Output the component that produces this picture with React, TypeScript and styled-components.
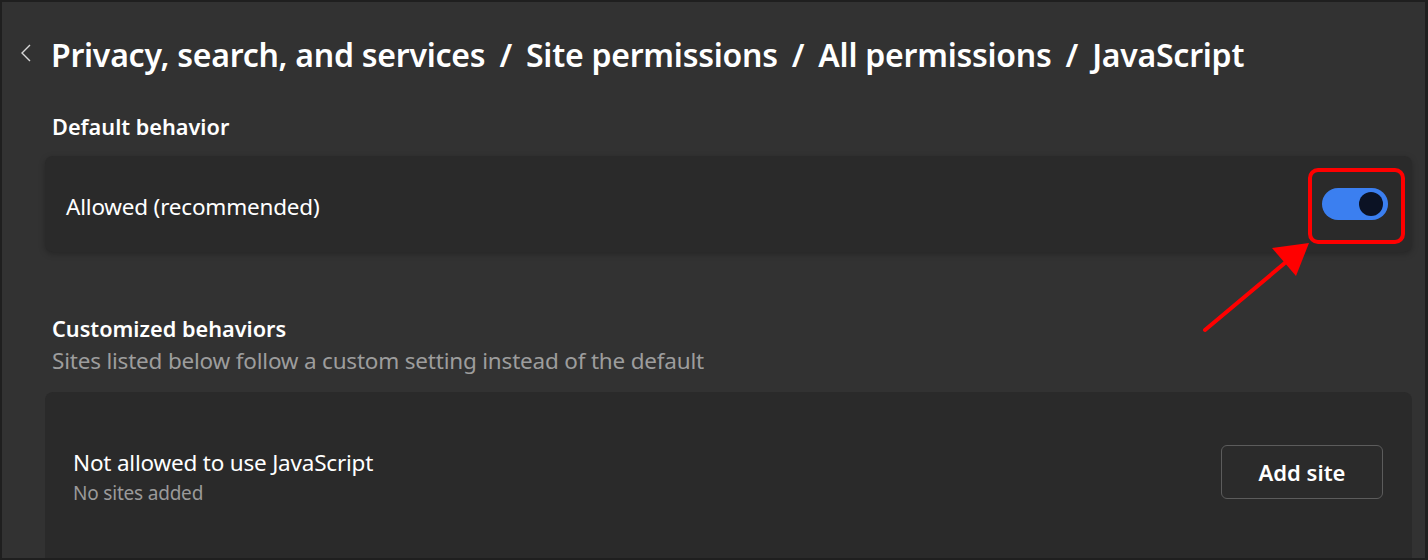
import React from 'react';
import styled, { createGlobalStyle } from 'styled-components';

const GlobalStyle = createGlobalStyle`
  html, body {
    margin: 0;
    padding: 0;
    background: #1e1e1e;
  }
  body {
    font-family: "Noto Sans", "Open Sans", sans-serif;
    color: #ffffff;
  }
`;

export default function App() {
  return (
    <>
      <GlobalStyle />
      <Frame>
        <Page>
          <Header>
            <BackButton aria-label="Back">
              <svg width="12" height="20" viewBox="0 0 12 20">
                <path d="M10 2 L2 10 L10 18" fill="none" stroke="#d8d8d8" strokeWidth="1.4" />
              </svg>
            </BackButton>
            <Title>
              Privacy, search, and services <Sep>/</Sep> Site permissions <Sep>/</Sep> All permissions{' '}
              <Sep>/</Sep> JavaScript
            </Title>
          </Header>

          <SectionTitle top={34}>Default behavior</SectionTitle>
          <Card>
            <SettingRow>
              <RowLabel shift={6}>Allowed (recommended)</RowLabel>
              <ToggleWrap>
                <Toggle on />
                <Highlight />
                <Arrow width="130" height="110" viewBox="0 0 130 110">
                  <path d="M13 102 L106 24" stroke="#ff0000" strokeWidth="4" strokeLinecap="round" fill="none" />
                  <path d="M117 15 L80 20 L104 48 Z" fill="#ff0000" />
                </Arrow>
              </ToggleWrap>
            </SettingRow>
          </Card>

          <SectionTitle top={62}>Customized behaviors</SectionTitle>
          <SectionNote>Sites listed below follow a custom setting instead of the default</SectionNote>

          <ListCard>
            <ListRow>
              <div>
                <RowLabel>Not allowed to use JavaScript</RowLabel>
                <RowNote>No sites added</RowNote>
              </div>
              <AddButton>Add site</AddButton>
            </ListRow>
          </ListCard>
        </Page>
      </Frame>
    </>
  );
}

const Frame = styled.div`
  width: 1428px;
  height: 560px;
  box-sizing: border-box;
  border: 2px solid #1f1f1f;
  border-right-width: 3px;
  background: #323232;
  overflow: hidden;
`;

const Page = styled.div`
  padding: 28px 13px 0 43px;
  display: flex;
  flex-direction: column;
`;

const Header = styled.div`
  display: flex;
  align-items: center;
  margin-left: -28px;
  height: 48px;
`;

const BackButton = styled.div`
  width: 31px;
  display: flex;
  align-items: center;
  padding-left: 3px;
  margin-top: -2px;
`;

const Title = styled.h1`
  margin: 0;
  font-size: 32px;
  font-weight: 600;
  letter-spacing: -0.25px;
  color: #ffffff;
  white-space: nowrap;
`;

const Sep = styled.span`
  margin: 0 6px;
`;

const SectionTitle = styled.h2<{ top: number }>`
  margin: ${(p) => p.top}px 0 0 7px;
  font-size: 21.7px;
  font-weight: 600;
  line-height: 30px;
  color: #ffffff;
`;

const SectionNote = styled.div`
  margin: 2px 0 0 7px;
  font-size: 22.5px;
  line-height: 30px;
  color: #9d9d9d;
  letter-spacing: -0.2px;
`;

const Card = styled.div`
  margin-top: 14px;
  background: #2a2a2a;
  border-radius: 8px;
  box-shadow: 0 2px 6px rgba(0, 0, 0, 0.25);
`;

const SettingRow = styled.div`
  height: 96px;
  display: flex;
  align-items: center;
  justify-content: space-between;
  padding: 0 24px 0 21px;
`;

const RowLabel = styled.div<{ shift?: number }>`
  font-size: 22.5px;
  line-height: 30px;
  color: #ffffff;
  letter-spacing: -0.2px;
  margin-top: ${(p) => p.shift ?? 0}px;
`;

const RowNote = styled.div`
  font-size: 19px;
  line-height: 24px;
  color: #9a9a9a;
  margin-top: 3px;
  letter-spacing: -0.2px;
`;

const ToggleWrap = styled.div`
  position: relative;
  display: flex;
  align-items: center;
`;

const Toggle = styled.div<{ on?: boolean }>`
  width: 66px;
  height: 32px;
  border-radius: 16px;
  background: ${(p) => (p.on ? '#3b7ff0' : '#555')};
  position: relative;
  &::after {
    content: '';
    position: absolute;
    top: 4px;
    right: 5px;
    width: 24px;
    height: 24px;
    border-radius: 50%;
    background: #0b1224;
  }
`;

const Highlight = styled.div`
  position: absolute;
  left: -14px;
  top: -20px;
  width: 89px;
  height: 68px;
  border: 4px solid #ff0000;
  border-radius: 10px;
`;

const Arrow = styled.svg`
  position: absolute;
  left: -130px;
  top: 40px;
  overflow: visible;
`;

const ListCard = styled.div`
  margin-top: 16px;
  background: #2a2a2a;
  border-radius: 8px 8px 0 0;
  height: 200px;
`;

const ListRow = styled.div`
  display: flex;
  align-items: flex-start;
  justify-content: space-between;
  padding: 56px 29px 0 28px;
`;

const AddButton = styled.button`
  width: 162px;
  height: 54px;
  background: #2b2b2b;
  border: 1px solid #5c5c5c;
  border-radius: 6px;
  color: #ffffff;
  font-family: "Noto Sans", sans-serif;
  font-size: 22px;
  font-weight: 600;
  margin-top: -3px;
`;
